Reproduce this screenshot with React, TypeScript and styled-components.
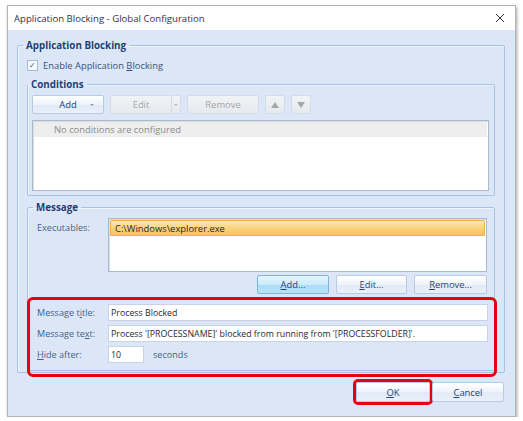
import React from "react";
import styled, { createGlobalStyle } from "styled-components";

const GlobalStyle = createGlobalStyle`
  body {
    margin: 0;
    background: #ffffff;
    font-family: "Open Sans", "Noto Sans", sans-serif;
    font-size: 9.4px;
    color: #1e1e1e;
  }
`;

const Window = styled.div`
  margin: 5px 0 0 7px;
  width: 509px;
  height: 412px;
  border: 1px solid #b4b4b4;
  box-shadow: 1px 2px 3px rgba(0, 0, 0, 0.35);
  display: flex;
  flex-direction: column;
  box-sizing: border-box;
`;

const TitleBar = styled.div`
  height: 24px;
  background: #ffffff;
  display: flex;
  align-items: center;
  justify-content: space-between;
  padding: 0 10px 0 6px;
  color: #3a2f4a;
  font-size: 9.6px;
  flex-shrink: 0;
`;

const CloseIcon = styled.svg`
  width: 10px;
  height: 10px;
`;

const Body = styled.div`
  flex: 1;
  background: #dbe7f7;
  padding: 9px 10px 0 9px;
  display: flex;
  flex-direction: column;
`;

const Group = styled.fieldset<{ $pad?: string }>`
  margin: 0;
  padding: ${(p) => p.$pad || "0 9px 6px 9px"};
  border: 1px solid #a8c1e4;
  border-radius: 2px;
  box-shadow: inset 1px 1px 0 #eef4fc;
  min-width: 0;
`;

const Legend = styled.legend`
  padding: 0 3px;
  margin-left: -4px;
  font-weight: 700;
  font-size: 9.8px;
  color: #1f3f78;
  line-height: 13px;
`;

const CheckRow = styled.label`
  display: flex;
  align-items: center;
  gap: 5px;
  height: 18px;
  margin: 4px 0 4px 0;
  color: #3c5377;
`;

const CheckBox = styled.span`
  width: 9px;
  height: 9px;
  border: 1px solid #a9bcd7;
  background: #f4f7fb;
  display: flex;
  align-items: center;
  justify-content: center;
  font-size: 8px;
  color: #4d5e7a;
  line-height: 1;
`;

const U = styled.span`
  text-decoration: underline;
`;

const ButtonRow = styled.div<{ $justify?: string }>`
  display: flex;
  justify-content: ${(p) => p.$justify || "flex-start"};
  gap: 6px;
  align-items: center;
`;

const Btn = styled.button<{ $w: number; $h?: number; $disabled?: boolean; $hot?: boolean }>`
  width: ${(p) => p.$w}px;
  height: ${(p) => p.$h || 19}px;
  padding: 0;
  font-family: inherit;
  font-size: 9.4px;
  border: 1px solid ${(p) => (p.$hot ? "#7fb3d9" : p.$disabled ? "#d3dce8" : "#b9cbe4")};
  border-radius: 2px;
  background: ${(p) =>
    p.$hot
      ? "linear-gradient(#e4f4fd, #cdebfb 50%, #a9dcf6 51%, #b9e4f9)"
      : p.$disabled
      ? "linear-gradient(#f1f3f6, #e6e9ee)"
      : "linear-gradient(#ffffff, #eef3fa 50%, #e2eaf6 51%, #e9f0f9)"};
  color: ${(p) => (p.$disabled ? "#a6a6a6" : "#26457c")};
  display: flex;
  align-items: center;
  justify-content: center;
  position: relative;
`;

const SplitBtn = styled.div`
  display: flex;
`;

const DropPart = styled.span<{ $disabled?: boolean }>`
  width: 9px;
  height: 19px;
  box-sizing: border-box;
  border: 1px solid ${(p) => (p.$disabled ? "#d3dce8" : "#b9cbe4")};
  border-left: none;
  background: ${(p) => (p.$disabled ? "linear-gradient(#f1f3f6, #e6e9ee)" : "transparent")};
  display: flex;
  align-items: center;
  justify-content: center;
`;

const Caret = styled.span<{ $color?: string }>`
  width: 0;
  height: 0;
  border-left: 2px solid transparent;
  border-right: 2px solid transparent;
  border-top: 2px solid ${(p) => p.$color || "#8a9ab5"};
`;

const InlineCaret = styled(Caret)`
  position: absolute;
  right: 9px;
  top: 8px;
`;

const Arrow = styled.span<{ $up?: boolean }>`
  width: 0;
  height: 0;
  border-left: 4px solid transparent;
  border-right: 4px solid transparent;
  ${(p) => (p.$up ? "border-bottom: 6px solid #a7a7a7;" : "border-top: 6px solid #a7a7a7;")}
`;

const ListBox = styled.div<{ $h: number }>`
  height: ${(p) => p.$h}px;
  background: #ffffff;
  border: 1px solid #abb9cc;
  box-shadow: inset 1px 1px 0 #d8dee6;
  box-sizing: border-box;
  padding: 1px;
`;

const ListHeader = styled.div`
  height: 15px;
  background: #eeeeef;
  color: #8d8d8d;
  display: flex;
  align-items: center;
  padding-left: 20px;
`;

const SelectedItem = styled.div`
  height: 16px;
  background: linear-gradient(#fde8b4, #fbd37f 50%, #f9c25d 100%);
  border: 1px solid #f0b347;
  border-radius: 1px;
  box-sizing: border-box;
  display: flex;
  align-items: center;
  padding-left: 4px;
  color: #2b2b2b;
`;

const FormRow = styled.div`
  display: flex;
  align-items: center;
  height: 21px;
`;

const FieldLabel = styled.span`
  width: 71px;
  flex-shrink: 0;
  color: #4a6187;
  font-size: 9.1px;
  align-self: flex-start;
  padding-top: 3px;
`;

const FieldLabelMid = styled(FieldLabel)`
  align-self: center;
  padding-top: 0;
`;

const TextInput = styled.div<{ $w?: number }>`
  ${(p) => (p.$w ? `width: ${p.$w}px;` : "flex: 1;")}
  height: 17px;
  box-sizing: border-box;
  border: 1px solid #c6d4e6;
  background: #ffffff;
  display: flex;
  align-items: center;
  padding-left: 2px;
  color: #2a2a2a;
  font-size: 8.8px;
  white-space: nowrap;
`;

const Suffix = styled.span`
  margin-left: 9px;
  color: #4a6187;
  font-size: 9.1px;
`;

const Highlight = styled.div`
  border: 3px solid #e8000f;
  border-radius: 6px;
  margin: 3px -10px -7px -10px;
  padding: 1px 6px 9px 7px;
`;

const OkHighlight = styled.div`
  border: 3px solid #e8000f;
  border-radius: 5px;
  padding: 0;
  margin: -2px;
  display: flex;
`;

const Footer = styled.div`
  display: flex;
  justify-content: flex-end;
  gap: 1px;
  padding: 8px 1px 0 0;
  align-items: center;
`;

export default function App() {
  return (
    <>
      <GlobalStyle />
      <Window>
        <TitleBar>
          <span>Application Blocking - Global Configuration</span>
          <CloseIcon viewBox="0 0 10 10">
            <path d="M1 1 L9 9 M9 1 L1 9" stroke="#333" strokeWidth="1" />
          </CloseIcon>
        </TitleBar>
        <Body>
          <Group $pad="0 9px 0 9px">
            <Legend>Application Blocking</Legend>
            <CheckRow>
              <CheckBox>✓</CheckBox>
              <span>
                Enable Application <U>B</U>locking
              </span>
            </CheckRow>
            <Group $pad="4px 5px 4px 4px">
              <Legend>Conditions</Legend>
              <ButtonRow>
                <Btn $w={72}>
                  Add
                  <InlineCaret />
                </Btn>
                <SplitBtn>
                  <Btn $w={62} $disabled>
                    Edit
                  </Btn>
                  <DropPart $disabled>
                    <Caret $color="#b9b9b9" />
                  </DropPart>
                </SplitBtn>
                <Btn $w={72} $disabled>
                  Remove
                </Btn>
                <Btn $w={20} $disabled>
                  <Arrow $up />
                </Btn>
                <Btn $w={20} $disabled>
                  <Arrow />
                </Btn>
              </ButtonRow>
              <ListBox $h={71} style={{ marginTop: 6 }}>
                <ListHeader>No conditions are configured</ListHeader>
              </ListBox>
            </Group>
            <Group $pad="4px 7px 0 9px" style={{ marginTop: 5 }}>
              <Legend>Message</Legend>
              <FormRow style={{ height: "auto", alignItems: "flex-start" }}>
                <FieldLabel>Executables:</FieldLabel>
                <ListBox $h={54} style={{ flex: 1 }}>
                  <SelectedItem>C:\Windows\explorer.exe</SelectedItem>
                </ListBox>
              </FormRow>
              <ButtonRow $justify="flex-end" style={{ marginTop: 3, gap: 7 }}>
                <Btn $w={72} $hot>
                  <U>A</U>dd...
                </Btn>
                <Btn $w={71}>
                  <U>E</U>dit...
                </Btn>
                <Btn $w={73}>
                  <U>R</U>emove...
                </Btn>
              </ButtonRow>
              <Highlight>
                <FormRow style={{ marginTop: 1 }}>
                  <FieldLabelMid>
                    Message t<U>i</U>tle:
                  </FieldLabelMid>
                  <TextInput>Process Blocked</TextInput>
                </FormRow>
                <FormRow>
                  <FieldLabelMid>
                    Message te<U>x</U>t:
                  </FieldLabelMid>
                  <TextInput>
                    Process '[PROCESSNAME]' blocked from running from '[PROCESSFOLDER]'.
                  </TextInput>
                </FormRow>
                <FormRow>
                  <FieldLabelMid>
                    <U>H</U>ide after:
                  </FieldLabelMid>
                  <TextInput $w={36}>10</TextInput>
                  <Suffix>seconds</Suffix>
                </FormRow>
              </Highlight>
            </Group>
            <div style={{ height: 1 }} />
          </Group>
          <Footer>
            <OkHighlight>
              <Btn $w={74} $h={20}>
                <U>O</U>K
              </Btn>
            </OkHighlight>
            <Btn $w={72} $h={20}>
              <U>C</U>ancel
            </Btn>
          </Footer>
        </Body>
      </Window>
    </>
  );
}
